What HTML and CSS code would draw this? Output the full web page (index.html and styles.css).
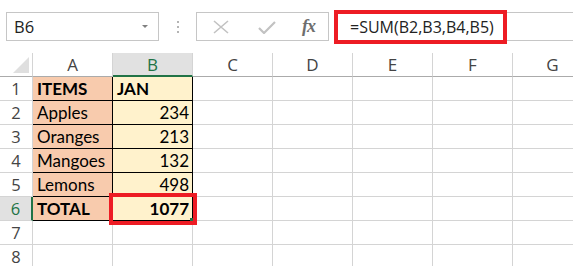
FILE: index.html
```html
<html>

<head>
	<link rel="stylesheet" href="styles.css">
</head>

<body>
	<div class="toolbar">
		<div class="name-box">
			<span class="name-text">B6</span>
			<span class="caret"></span>
		</div>
		<div class="grip">
			<span></span><span></span><span></span>
		</div>
		<div class="fx-buttons">
			<svg class="icon" width="16" height="14" viewBox="0 0 16 14">
				<path d="M1 1 L15 13 M15 1 L1 13" stroke="#c2c2c2" stroke-width="1.6" fill="none" />
			</svg>
			<svg class="icon" width="18" height="13" viewBox="0 0 18 13">
				<path d="M1 7 L6 12 L17 1" stroke="#c2c2c2" stroke-width="2.2" fill="none" />
			</svg>
			<span class="fx">fx</span>
		</div>
		<div class="formula-bar">
			<span class="formula">=SUM(B2,B3,B4,B5)</span>
		</div>
	</div>

	<div class="sheet">
		<div class="corner"><span class="tri"></span></div>
		<div class="col-head">A</div>
		<div class="col-head active">B</div>
		<div class="col-head">C</div>
		<div class="col-head">D</div>
		<div class="col-head">E</div>
		<div class="col-head">F</div>
		<div class="col-head">G</div>

		<div class="row-head">1</div>
		<div class="cell item bold">ITEMS</div>
		<div class="cell jan bold">JAN</div>
		<div class="cell"></div><div class="cell"></div><div class="cell"></div><div class="cell"></div><div class="cell"></div>

		<div class="row-head">2</div>
		<div class="cell item">Apples</div>
		<div class="cell val num">234</div>
		<div class="cell"></div><div class="cell"></div><div class="cell"></div><div class="cell"></div><div class="cell"></div>

		<div class="row-head">3</div>
		<div class="cell item">Oranges</div>
		<div class="cell val num">213</div>
		<div class="cell"></div><div class="cell"></div><div class="cell"></div><div class="cell"></div><div class="cell"></div>

		<div class="row-head">4</div>
		<div class="cell item">Mangoes</div>
		<div class="cell val num">132</div>
		<div class="cell"></div><div class="cell"></div><div class="cell"></div><div class="cell"></div><div class="cell"></div>

		<div class="row-head">5</div>
		<div class="cell item">Lemons</div>
		<div class="cell val num">498</div>
		<div class="cell"></div><div class="cell"></div><div class="cell"></div><div class="cell"></div><div class="cell"></div>

		<div class="row-head active">6</div>
		<div class="cell item bold">TOTAL</div>
		<div class="cell val num bold selected">1077</div>
		<div class="cell"></div><div class="cell"></div><div class="cell"></div><div class="cell"></div><div class="cell"></div>

		<div class="row-head">7</div>
		<div class="cell"></div><div class="cell"></div><div class="cell"></div><div class="cell"></div><div class="cell"></div><div class="cell"></div><div class="cell"></div>

		<div class="row-head">8</div>
		<div class="cell"></div><div class="cell"></div><div class="cell"></div><div class="cell"></div><div class="cell"></div><div class="cell"></div><div class="cell"></div>
	</div>
</body>

</html>
```

FILE: styles.css
```css
body {
	margin: 0;
	background-color: #ffffff;
	font-family: "Open Sans", sans-serif;
	overflow: hidden;
}

.toolbar {
	display: flex;
	align-items: center;
	height: 29px;
	padding-top: 12px;
	margin-bottom: 12px;
}

.name-box {
	box-sizing: border-box;
	display: flex;
	align-items: center;
	justify-content: space-between;
	width: 153px;
	height: 29px;
	margin-left: 6px;
	padding: 0 10px 0 7px;
	border: 1px solid #c6c6c6;
	font-size: 16.5px;
	color: #222222;
}

.caret {
	width: 0;
	height: 0;
	border-left: 3px solid transparent;
	border-right: 3px solid transparent;
	border-top: 3px solid #808080;
}

.grip {
	display: flex;
	flex-direction: column;
	align-items: center;
	gap: 3px;
	width: 37px;
}

.grip span {
	width: 2px;
	height: 2px;
	background-color: #b4b4b4;
}

.fx-buttons {
	box-sizing: border-box;
	display: flex;
	align-items: center;
	width: 133px;
	height: 29px;
	padding-left: 16px;
	border: 1px solid #c6c6c6;
}

.fx-buttons .icon:first-child {
	margin-right: 29px;
}

.fx-buttons .icon + .icon {
	margin-right: 26px;
	margin-top: 1px;
}

.fx {
	font-family: "Liberation Serif", serif;
	font-style: italic;
	font-weight: bold;
	font-size: 18px;
	color: #6e6e6e;
	letter-spacing: -1px;
}

.formula-bar {
	box-sizing: border-box;
	flex: 1;
	display: flex;
	align-items: center;
	height: 29px;
	margin-left: 5px;
	border-top: 1px solid #c6c6c6;
	border-bottom: 1px solid #c6c6c6;
}

.formula {
	box-sizing: border-box;
	height: 34px;
	padding: 2px 0 0 12px;
	width: 173px;
	border: 4px solid #ed1c24;
	font-size: 16px;
	color: #222222;
}

.sheet {
	display: grid;
	grid-template-columns: 33px repeat(7, 80px);
	grid-auto-rows: 24px;
}

.sheet > div {
	box-sizing: border-box;
	border-right: 1px solid #d4d4d4;
	border-bottom: 1px solid #d4d4d4;
}

.corner {
	position: relative;
	border-bottom-color: #ababab !important;
}

.tri {
	position: absolute;
	right: 3px;
	bottom: 3px;
	width: 0;
	height: 0;
	border-left: 16px solid transparent;
	border-bottom: 16px solid #dfdfdf;
}

.col-head {
	display: flex;
	align-items: center;
	justify-content: center;
	font-size: 17px;
	color: #444444;
	border-bottom-color: #ababab !important;
}

.col-head.active {
	background-color: #e1e1e1;
	color: #217346;
	border-bottom: 2px solid #217346 !important;
}

.row-head {
	display: flex;
	align-items: center;
	justify-content: center;
	font-size: 16.5px;
	color: #444444;
}

.row-head.active {
	background-color: #e1e1e1;
	color: #217346;
	border-right: 2px solid #217346 !important;
}

.cell {
	display: flex;
	align-items: flex-end;
	padding: 0 3px 1px 4px;
	font-family: "Lato", sans-serif;
	font-size: 17px;
	color: #000000;
}

.item {
	background-color: #f8cbad;
	border-right-color: #000000 !important;
	border-bottom-color: #000000 !important;
}

.jan,
.val {
	background-color: #fff2cc;
	border-right-color: #000000 !important;
	border-bottom-color: #000000 !important;
}

.num {
	justify-content: flex-end;
}

.bold {
	font-weight: bold;
}

.selected {
	position: relative;
	z-index: 1;
	outline: 4px solid #ed1c24;
}

.selected::after {
	content: "";
	position: absolute;
	right: -1px;
	bottom: -1px;
	width: 3px;
	height: 3px;
	background-color: #217346;
}
```
